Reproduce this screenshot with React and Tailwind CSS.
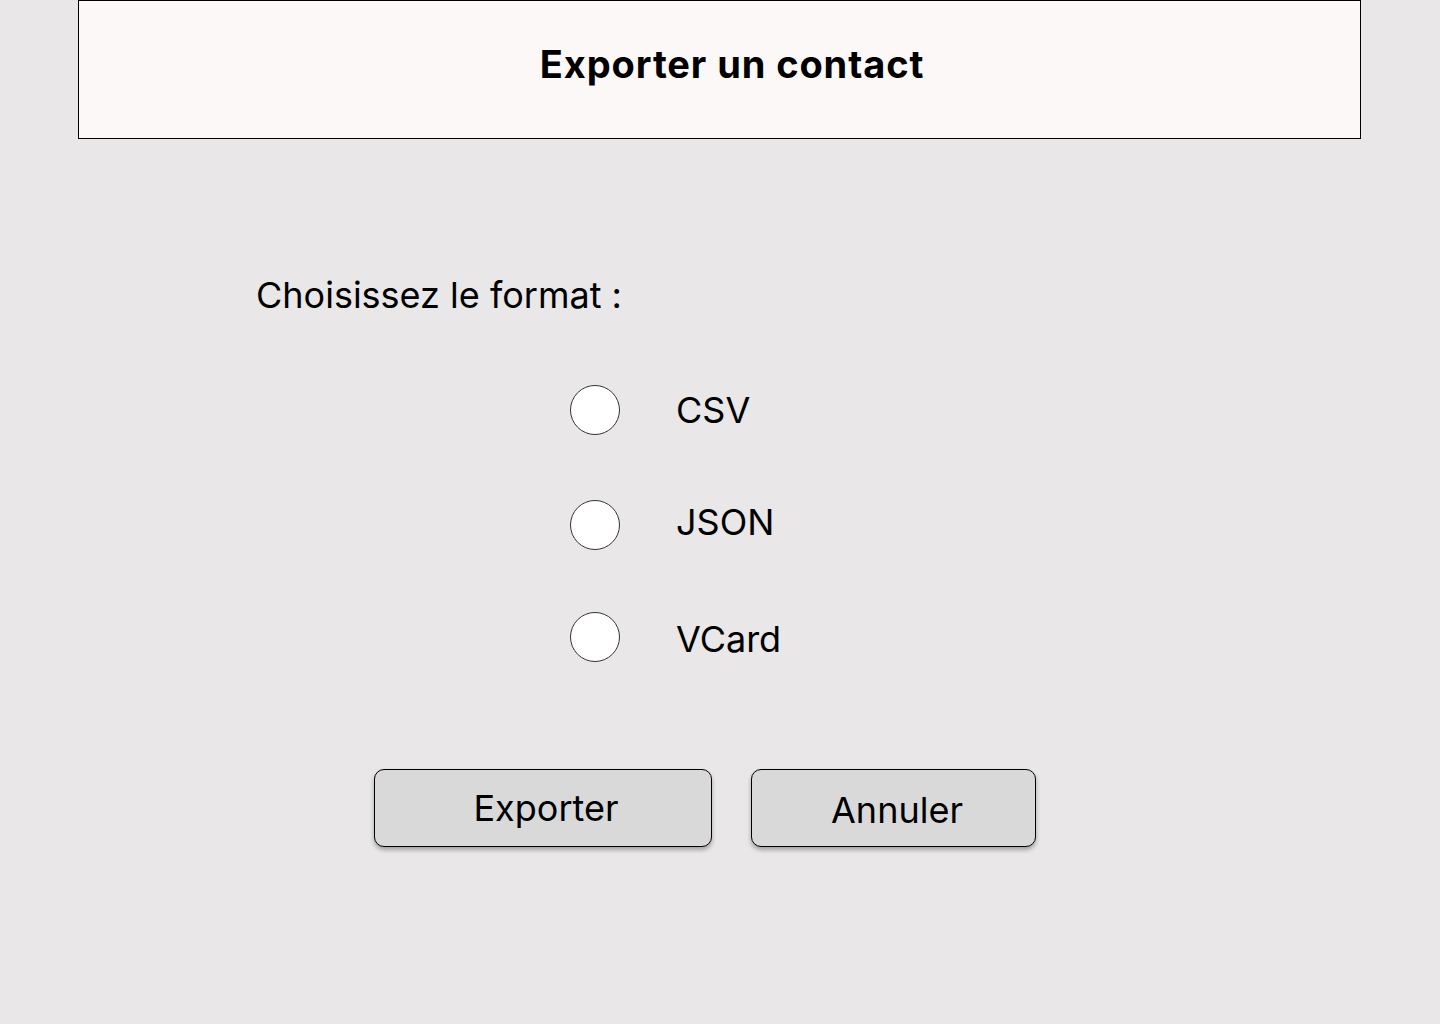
const formats = [
  { id: 'csv', label: 'CSV', rowMt: 'mt-[246px]', nudge: '' },
  { id: 'json', label: 'JSON', rowMt: 'mt-[65px]', nudge: '-translate-y-[3px]' },
  { id: 'vcard', label: 'VCard', rowMt: 'mt-[62px]', nudge: 'translate-y-[2px]' },
]

function Radio({ label, className, nudge }) {
  return (
    <label className={`flex items-center ml-[570px] h-[50px] ${className}`}>
      <span className="w-[50px] h-[50px] rounded-full bg-white border border-[#333]" />
      <span className={`ml-[56px] text-[36px] leading-none text-black ${nudge}`}>{label}</span>
    </label>
  )
}

export default function App() {
  return (
    <div
      className="relative w-[1440px] h-[1024px] bg-[#e9e7e8] overflow-hidden"
      style={{ fontFamily: 'Inter, "Noto Sans", sans-serif' }}
    >
      <header className="ml-[78px] w-[1283px] h-[139px] bg-[#fdf8f8] border border-black">
        <h1 className="pt-[44px] pl-[25px] text-center text-[38px] leading-none font-bold tracking-[0.9px] text-black">
          Exporter un contact
        </h1>
      </header>

      <p className="absolute left-[256px] top-[277px] text-[36px] leading-none text-black">
        Choisissez le format :
      </p>

      <div className="flex flex-col">
        {formats.map((f) => (
          <Radio key={f.id} label={f.label} className={f.rowMt} nudge={f.nudge} />
        ))}
      </div>

      <div className="flex ml-[374px] mt-[107px] gap-[39px]">
        <button className="w-[338px] h-[78px] rounded-[10px] bg-[#d9d9d9] border border-black shadow-[0_3px_4px_rgba(0,0,0,0.3)] text-[36px] text-black leading-none">
          <span className="pl-[6px]">Exporter</span>
        </button>
        <button className="w-[285px] h-[78px] rounded-[10px] bg-[#d9d9d9] border border-black shadow-[0_3px_4px_rgba(0,0,0,0.3)] text-[36px] text-black leading-none pt-[4px]">
          <span className="pl-[7px]">Annuler</span>
        </button>
      </div>
    </div>
  )
}
